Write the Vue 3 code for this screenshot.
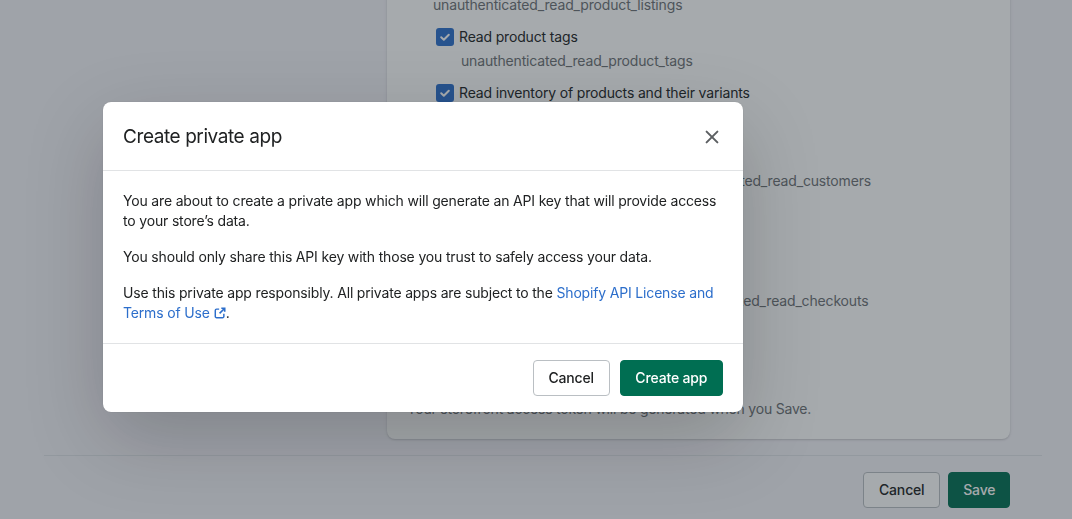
<script setup>
const scopes = [
  { label: 'Read product listings', code: 'unauthenticated_read_product_listings', shift: 'near' },
  { label: 'Read product tags', code: 'unauthenticated_read_product_tags' },
  { label: 'Read inventory of products and their variants', code: 'unauthenticated_read_product_inventory' },
  { label: 'Read and modify customer details', code: 'unauthenticated_write_customers, unauthenticated_read_customers', gap: true, shift: 'far' },
  { label: 'Read customer tags', code: 'unauthenticated_read_customer_tags' },
  { label: 'Read and modify checkouts', code: 'unauthenticated_write_checkouts, unauthenticated_read_checkouts', gap: true, shift: 'far' },
  { label: 'Read content', code: 'unauthenticated_read_content' },
]
</script>

<template>
  <div class="page">
    <div class="content">
      <section class="card">
        <div v-for="s in scopes" :key="s.code" class="scope" :class="{ gap: s.gap }">
          <div class="scope-row">
            <span class="check">
              <svg viewBox="0 0 18 18" width="18" height="18"><path d="M5.2 9.3l2.6 2.5 5-5" fill="none" stroke="#fff" stroke-width="2" stroke-linecap="round" stroke-linejoin="round"/></svg>
            </span>
            <span>{{ s.label }}</span>
          </div>
          <div class="code" :class="s.shift">{{ s.code }}</div>
        </div>
        <p class="token">Your storefront access token will be generated when you Save.</p>
      </section>
    </div>
    <footer class="page-actions">
      <button class="btn">Cancel</button>
      <button class="btn primary">Save</button>
    </footer>

    <div class="overlay">
      <div class="modal">
        <header class="modal-head">
          <h2>Create private app</h2>
          <button class="close" aria-label="Close">
            <svg viewBox="0 0 20 20" width="20" height="20"><path d="M4.6 4.6l10.8 10.8M15.4 4.6L4.6 15.4" fill="none" stroke="#5c5f62" stroke-width="2" stroke-linecap="round"/></svg>
          </button>
        </header>
        <div class="modal-body">
          <p>You are about to create a private app which will generate an API key that will provide access to your store’s data.</p>
          <p>You should only share this API key with those you trust to safely access your data.</p>
          <p>Use this private app responsibly. All private apps are subject to the <a href="#" class="link">Shopify API License and Terms of Use<svg class="ext" viewBox="0 0 14 14" width="12" height="12"><path d="M6 2.5H3A1.5 1.5 0 0 0 1.5 4v7A1.5 1.5 0 0 0 3 12.5h7a1.5 1.5 0 0 0 1.5-1.5V8" fill="none" stroke="#2c6ecb" stroke-width="1.7"/><path d="M8.5 1.5h4v4M12.2 1.8L6.5 7.5" fill="none" stroke="#2c6ecb" stroke-width="1.9"/></svg></a>.</p>
        </div>
        <footer class="modal-foot">
          <button class="btn">Cancel</button>
          <button class="btn primary">Create app</button>
        </footer>
      </div>
    </div>
  </div>
</template>

<style>
html, body { margin: 0; overflow: hidden; }
</style>

<style scoped>
.page {
  height: 519px;
  overflow: hidden;
  display: flex;
  flex-direction: column;
  justify-content: flex-end;
  background: #f4f3f9;
  font-family: Inter, "Noto Sans", sans-serif;
  font-size: 14px;
  letter-spacing: -0.16px;
  line-height: 20px;
  color: #202223;
}
.content {
  flex: none;
  display: flex;
  justify-content: flex-end;
  padding: 0 62px 16px 0;
}
.card {
  width: 623px;
  box-sizing: border-box;
  padding: 0 20px 20px 20px;
  background: #fff;
  border-radius: 8px;
  box-shadow: 0 0 5px rgba(23, 24, 24, .05), 0 1px 2px rgba(0, 0, 0, .15);
}
.scope { padding: 0 0 12px 29px; }
.scope.gap { padding-top: 8px; }
.scope-row { display: flex; align-items: center; gap: 5px; margin-bottom: 4px; }
.check {
  width: 18px;
  height: 18px;
  flex: none;
  border-radius: 3px;
  background: #2c6ecb;
  display: flex;
}
.code { padding-left: 25px; color: #6d7175; }
.code.near { margin-left: -28px; }
.code.far { margin-left: -30px; }
.token { margin: 20px 0 0; color: #6d7175; letter-spacing: -0.21px; }
.page-actions {
  flex: none;
  margin: 0 30px 11px 44px;
  border-top: 1px solid #dfe3e8;
  padding: 16px 32px 0 0;
  display: flex;
  justify-content: flex-end;
  gap: 8px;
}
.btn {
  height: 36px;
  box-sizing: border-box;
  padding: 0 15px;
  font: inherit;
  letter-spacing: inherit;
  font-weight: 450;
  color: #202223;
  background: #fff;
  border: 1px solid #babfc3;
  border-radius: 4px;
}
.btn.primary {
  padding: 0 13.7px;
  background: #006e52;
  border-color: #006e52;
  color: #fff;
}
.overlay {
  position: fixed;
  inset: 0;
  background: rgba(33, 43, 50, .4);
  padding: 102px 0 0 103px;
}
.modal {
  width: 640px;
  background: #fff;
  border-radius: 8px;
  box-shadow: 0 26px 80px rgba(0, 0, 0, .2), 0 0 1px rgba(0, 0, 0, .2);
}
.modal-head {
  height: 67px;
  padding: 1px 21px 0 20px;
  border-bottom: 1px solid #e1e3e5;
  display: flex;
  align-items: center;
  justify-content: space-between;
}
h2 { margin: 0; font-size: 19px; line-height: 24px; font-weight: 400; letter-spacing: -0.42px; }
.close { display: flex; padding: 0; border: 0; background: none; }
.modal-body { padding: 20px; border-bottom: 1px solid #e1e3e5; letter-spacing: -0.17px; }
.modal-body p { margin: 0 0 16px; }
.modal-body p:last-child { margin: 0; }
.link { color: #2c6ecb; text-decoration: none; }
.ext { vertical-align: -1px; margin-left: 4px; }
.modal-foot {
  height: 68px;
  padding: 0 20px;
  display: flex;
  align-items: center;
  justify-content: flex-end;
  gap: 10px;
}
.modal-foot .btn, .modal-foot .btn.primary { padding: 0 14.7px; }
</style>
